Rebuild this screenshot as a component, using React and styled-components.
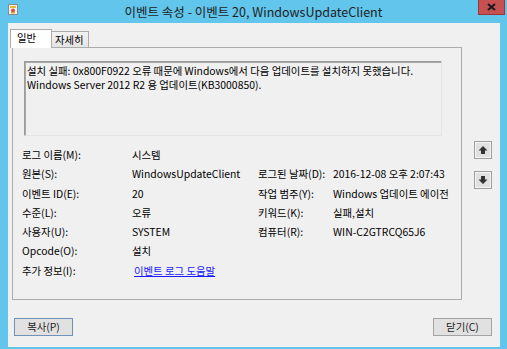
import React from 'react';
import styled, { createGlobalStyle } from 'styled-components';

const Global = createGlobalStyle`
  html, body { margin: 0; padding: 0; background: #62c5eb; }
  body { font-family: "Noto Sans CJK KR", "Noto Sans", sans-serif; }
  * { box-sizing: border-box; }
`;

const Frame = styled.div`
  width: 507px;
  height: 349px;
  background: #62c5eb;
  display: flex;
  flex-direction: column;
  overflow: hidden;
`;

const TitleBar = styled.div`
  height: 23px;
  flex: none;
  display: grid;
  grid-template-columns: 1fr auto 1fr;
  align-items: start;
`;

const IconSlot = styled.div`
  padding: 4px 0 0 8px;
  line-height: 0;
`;

const Title = styled.div`
  font-size: 12.5px;
  line-height: 23px;
  color: #1e1e1e;
  white-space: nowrap;
`;

const Close = styled.div`
  justify-self: end;
  margin-right: 2px;
  width: 27px;
  height: 15px;
  background: #c75050;
  border: 1px solid #9b3434;
  border-top: none;
  display: flex;
  align-items: center;
  justify-content: center;
`;

const Content = styled.div`
  flex: 1;
  margin: 0 7px 2px 8px;
  background: #f0f0f0;
  padding: 6px 8px 0 2px;
  display: flex;
  flex-direction: column;
  font-size: 10.4px;
  color: #000;
`;

const TopRow = styled.div`
  display: flex;
  align-items: flex-start;
`;

const TabControl = styled.div`
  width: 452px;
  display: flex;
  flex-direction: column;
`;

const TabStrip = styled.div`
  height: 18px;
  display: flex;
  align-items: flex-end;
  position: relative;
  z-index: 1;
`;

const Tab = styled.div`
  height: ${p => (p.$active ? 19 : 16)}px;
  width: ${p => p.$w}px;
  margin-bottom: ${p => (p.$active ? -1 : 0)}px;
  background: ${p => (p.$active ? '#ffffff' : 'linear-gradient(#f2f2f2, #e5e5e5)')};
  border: 1px solid #acacac;
  border-bottom: none;
  border-left: ${p => (p.$active ? '1px solid #acacac' : 'none')};
  padding-left: ${p => (p.$active ? 6 : 3)}px;
  line-height: ${p => (p.$active ? 16 : 15)}px;
  white-space: nowrap;
`;

const Panel = styled.div`
  margin-left: 2px;
  width: 450px;
  height: 253px;
  border: 1px solid #acacac;
  background: #f0f0f0;
  padding: 13px 0 0 9px;
`;

const MessageBox = styled.div`
  margin-left: 2px;
  width: 418px;
  height: 75px;
  border: 1px solid;
  border-color: #9c9c9c #e3e3e3 #e3e3e3 #9c9c9c;
  box-shadow: inset 1px 1px 0 #a8a8a8;
  padding: 2px 0 0 2px;
  line-height: 14px;
  white-space: nowrap;
`;

const Fields = styled.div`
  margin-top: 9px;
  display: grid;
  grid-template-columns: 110px 126px 75px 120px;
  grid-auto-rows: 19.3px;
  line-height: 19.3px;
  white-space: nowrap;
`;

const Cell = styled.div``;

const Link = styled.a`
  margin-left: 2px;
  color: #1a1aff;
  text-decoration: underline;
  cursor: pointer;
`;

const Side = styled.div`
  margin-left: 12px;
  padding-top: 112px;
  display: flex;
  flex-direction: column;
  gap: 12px;
`;

const ArrowButton = styled.div`
  width: 18px;
  height: 18px;
  background: #e1e1e1;
  border: 1px solid #9f9f9f;
  box-shadow: inset 0 0 0 1px #f4f4f4;
  display: flex;
  align-items: center;
  justify-content: center;
`;

const ButtonRow = styled.div`
  margin-top: 18px;
  padding-left: 4px;
  display: flex;
  justify-content: space-between;
`;

const Button = styled.div`
  width: 59px;
  height: 18px;
  background: #e1e1e1;
  border: 1px solid ${p => (p.$default ? '#6d93bb' : '#a3a3a3')};
  display: flex;
  align-items: center;
  justify-content: center;
  color: #222;
  line-height: 1;
`;

const TitleIcon = () => (
  <svg width="10" height="11" viewBox="0 0 10 11">
    <rect x="0.5" y="0.5" width="9" height="10" fill="#f4f4f4" stroke="#8a8a8a" />
    <rect x="2" y="2" width="6" height="2" fill="#e8b83a" />
    <circle cx="5" cy="6.5" r="2" fill="#e04b3b" />
    <rect x="3" y="8" width="4" height="1.5" fill="#d8a92f" />
  </svg>
);

const CloseGlyph = () => (
  <svg width="9" height="8" viewBox="0 0 9 8">
    <path d="M1 1 L8 7 M8 1 L1 7" stroke="#1a1a1a" strokeWidth="2" />
  </svg>
);

const Arrow = ({ down }) => (
  <svg width="10" height="10" viewBox="0 0 10 10" style={down ? { transform: 'rotate(180deg)' } : undefined}>
    <path d="M5 1 L9.5 5.5 L7 5.5 L7 9 L3 9 L3 5.5 L0.5 5.5 Z" fill="#333" />
  </svg>
);

const rows = [
  ['로그 이름(M):', '시스템', '', ''],
  ['원본(S):', 'WindowsUpdateClient', '로그된 날짜(D):', '2016-12-08 오후 2:07:43'],
  ['이벤트 ID(E):', '20', '작업 범주(Y):', 'Windows 업데이트 에이전'],
  ['수준(L):', '오류', '키워드(K):', '실패,설치'],
  ['사용자(U):', 'SYSTEM', '컴퓨터(R):', 'WIN-C2GTRCQ65J6'],
  ['Opcode(O):', '설치', '', ''],
];

export default function App() {
  return (
    <>
      <Global />
      <Frame>
        <TitleBar>
          <IconSlot><TitleIcon /></IconSlot>
          <Title>이벤트 속성 - 이벤트 20, WindowsUpdateClient</Title>
          <Close><CloseGlyph /></Close>
        </TitleBar>
        <Content>
          <TopRow>
            <TabControl>
              <TabStrip>
                <Tab $active $w={42}>일반</Tab>
                <Tab $w={37}>자세히</Tab>
              </TabStrip>
              <Panel>
                <MessageBox>
                  설치 실패: 0x800F0922 오류 때문에 Windows에서 다음 업데이트를 설치하지 못했습니다.
                  <br />
                  Windows Server 2012 R2 용 업데이트(KB3000850).
                </MessageBox>
                <Fields>
                  {rows.map((r, i) =>
                    r.map((c, j) => <Cell key={`${i}-${j}`}>{c}</Cell>)
                  )}
                  <Cell>추가 정보(I):</Cell>
                  <Cell><Link>이벤트 로그 도움말</Link></Cell>
                </Fields>
              </Panel>
            </TabControl>
            <Side>
              <ArrowButton><Arrow /></ArrowButton>
              <ArrowButton><Arrow down /></ArrowButton>
            </Side>
          </TopRow>
          <ButtonRow>
            <Button $default>복사(P)</Button>
            <Button>닫기(C)</Button>
          </ButtonRow>
        </Content>
      </Frame>
    </>
  );
}
